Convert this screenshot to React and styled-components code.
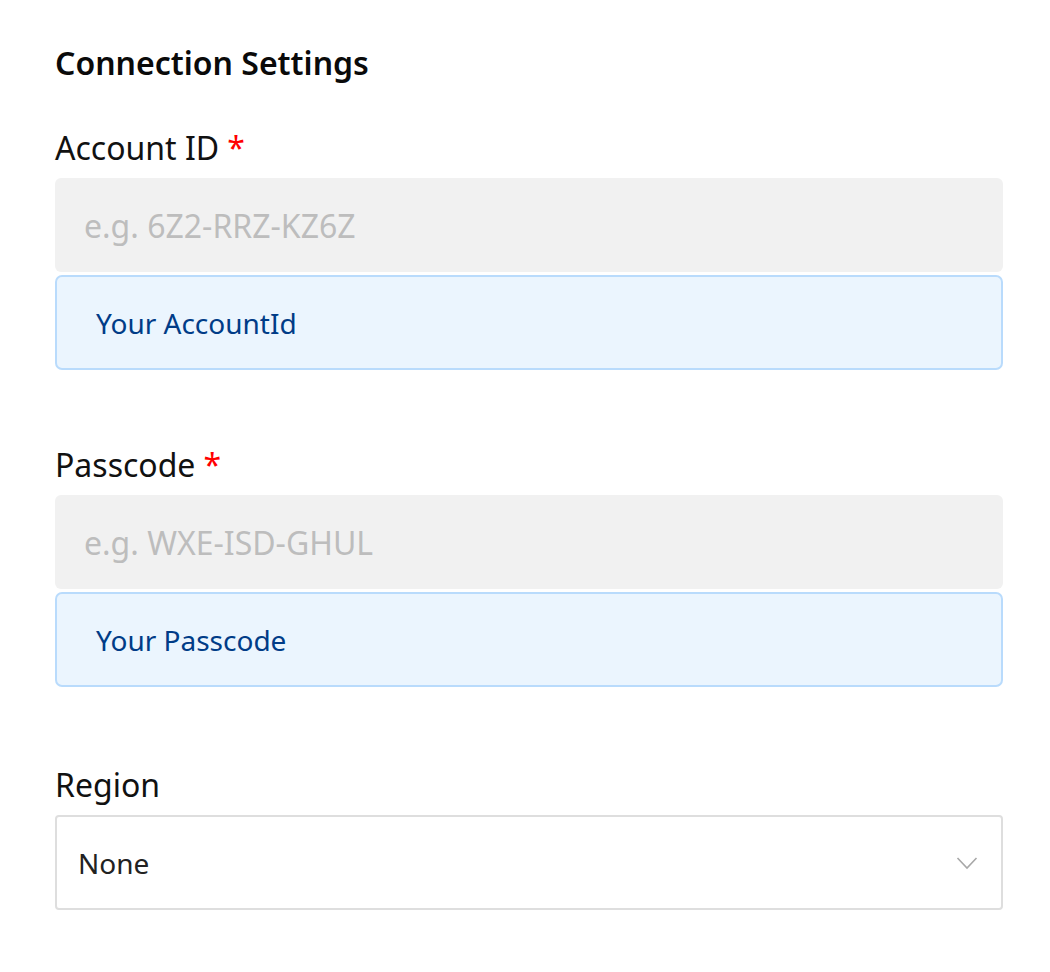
import React from "react";
import styled, { createGlobalStyle } from "styled-components";

const GlobalStyle = createGlobalStyle`
  body {
    margin: 0;
    background: #ffffff;
    font-family: "Noto Sans", "Open Sans", sans-serif;
    color: #111111;
  }
`;

const Page = styled.div`
  width: 948px;
  padding: 42px 47px 40px 55px;
`;

const Title = styled.h2`
  margin: 0 0 43px 0;
  font-size: 32px;
  line-height: 42px;
  font-weight: 600;
  color: #0a0a0a;
`;

const Field = styled.div`
  display: flex;
  flex-direction: column;
  margin-bottom: ${(p) => p.gap || 0}px;
`;

const Label = styled.label`
  font-size: 32px;
  line-height: 42px;
  margin-bottom: 9px;
  color: #111111;
`;

const Required = styled.span`
  color: #ff0000;
  margin-left: 8px;
`;

const Input = styled.input`
  box-sizing: border-box;
  height: 94px;
  width: 100%;
  border: none;
  border-radius: 6px;
  background: #f1f1f1;
  padding: 0 29px;
  font-family: "Noto Sans", sans-serif;
  font-size: 32px;
  color: #333;
  outline: none;
  &::placeholder {
    color: #bdbdbd;
  }
`;

const Hint = styled.div`
  box-sizing: border-box;
  margin-top: 3px;
  height: 95px;
  display: flex;
  align-items: center;
  padding: 0 39px;
  background: #ebf5fe;
  border: 2px solid #b9dbfc;
  border-radius: 7px;
  font-size: 28px;
  color: #003c87;
`;

const Select = styled.div`
  box-sizing: border-box;
  height: 95px;
  display: flex;
  align-items: center;
  justify-content: space-between;
  padding: 0 23px 0 21px;
  border: 2px solid #dedede;
  border-radius: 4px;
  font-size: 28px;
  color: #222222;
`;

const Chevron = () => (
  <svg width="22" height="14" viewBox="0 0 22 14" fill="none">
    <path d="M1.5 2 L11 12 L20.5 2" stroke="#a8a8a8" strokeWidth="1.6" />
  </svg>
);

const fields = [
  { label: "Account ID", placeholder: "e.g. 6Z2-RRZ-KZ6Z", hint: "Your AccountId", gap: 74 },
  { label: "Passcode", placeholder: "e.g. WXE-ISD-GHUL", hint: "Your Passcode", gap: 77 },
];

const App = () => {
  return (
    <>
      <GlobalStyle />
      <Page>
        <Title>Connection Settings</Title>
        {fields.map((f) => (
          <Field key={f.label} gap={f.gap}>
            <Label>
              {f.label}
              <Required>*</Required>
            </Label>
            <Input placeholder={f.placeholder} />
            <Hint>{f.hint}</Hint>
          </Field>
        ))}
        <Field>
          <Label>Region</Label>
          <Select>
            None
            <Chevron />
          </Select>
        </Field>
      </Page>
    </>
  );
};

export default App;
